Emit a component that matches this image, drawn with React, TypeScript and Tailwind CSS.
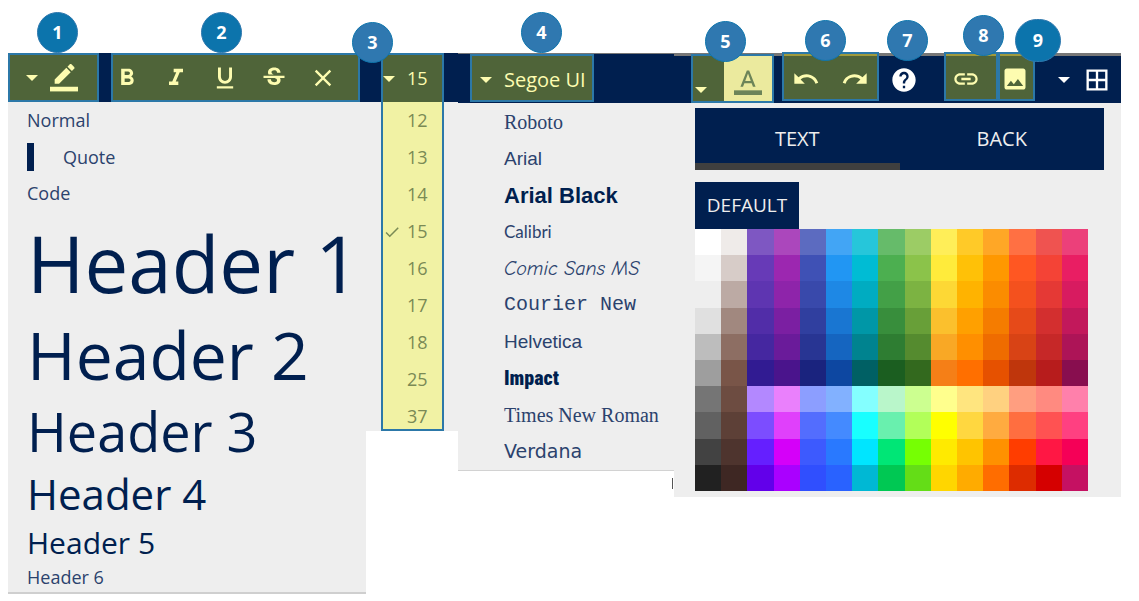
import type { ReactNode } from "react";
import {
  MdBorderAll,
  MdCheck,
  MdClose,
  MdFormatBold,
  MdFormatItalic,
  MdFormatUnderlined,
  MdHelp,
  MdImage,
  MdLink,
  MdRedo,
  MdStrikethroughS,
  MdUndo,
} from "react-icons/md";

const palette: string[][] = [
  ["#ffffff", "#f5f5f5", "#eeeeee", "#e0e0e0", "#bdbdbd", "#9e9e9e", "#757575", "#616161", "#424242", "#212121"],
  ["#efebe9", "#d7ccc8", "#bcaaa4", "#a1887f", "#8d6e63", "#795548", "#6d4c41", "#5d4037", "#4e342e", "#3e2723"],
  ["#7e57c2", "#673ab7", "#5e35b1", "#512da8", "#4527a0", "#311b92", "#b388ff", "#7c4dff", "#651fff", "#6200ea"],
  ["#ab47bc", "#9c27b0", "#8e24aa", "#7b1fa2", "#6a1b9a", "#4a148c", "#ea80fc", "#e040fb", "#d500f9", "#aa00ff"],
  ["#5c6bc0", "#3f51b5", "#3949ab", "#303f9f", "#283593", "#1a237e", "#8c9eff", "#536dfe", "#3d5afe", "#304ffe"],
  ["#42a5f5", "#2196f3", "#1e88e5", "#1976d2", "#1565c0", "#0d47a1", "#82b1ff", "#448aff", "#2979ff", "#2962ff"],
  ["#26c6da", "#00bcd4", "#00acc1", "#0097a7", "#00838f", "#006064", "#84ffff", "#18ffff", "#00e5ff", "#00b8d4"],
  ["#66bb6a", "#4caf50", "#43a047", "#388e3c", "#2e7d32", "#1b5e20", "#b9f6ca", "#69f0ae", "#00e676", "#00c853"],
  ["#9ccc65", "#8bc34a", "#7cb342", "#689f38", "#558b2f", "#33691e", "#ccff90", "#b2ff59", "#76ff03", "#64dd17"],
  ["#ffee58", "#ffeb3b", "#fdd835", "#fbc02d", "#f9a825", "#f57f17", "#ffff8d", "#ffff00", "#ffea00", "#ffd600"],
  ["#ffca28", "#ffc107", "#ffb300", "#ffa000", "#ff8f00", "#ff6f00", "#ffe57f", "#ffd740", "#ffc400", "#ffab00"],
  ["#ffa726", "#ff9800", "#fb8c00", "#f57c00", "#ef6c00", "#e65100", "#ffd180", "#ffab40", "#ff9100", "#ff6d00"],
  ["#ff7043", "#ff5722", "#f4511e", "#e64a19", "#d84315", "#bf360c", "#ff9e80", "#ff6e40", "#ff3d00", "#dd2c00"],
  ["#ef5350", "#f44336", "#e53935", "#d32f2f", "#c62828", "#b71c1c", "#ff8a80", "#ff5252", "#ff1744", "#d50000"],
  ["#ec407a", "#e91e63", "#d81b60", "#c2185b", "#ad1457", "#880e4f", "#ff80ab", "#ff4081", "#f50057", "#c51162"],
];

const sizes = [12, 13, 14, 15, 16, 17, 18, 25, 37];

const fonts: { name: string; className: string }[] = [
  { name: "Roboto", className: "font-['Liberation_Serif',serif] text-[20px]" },
  { name: "Arial", className: "font-['Liberation_Sans',sans-serif] text-[19px]" },
  { name: "Arial Black", className: "font-['Liberation_Sans',sans-serif] text-[22px] font-black text-[#001f4f]" },
  { name: "Calibri", className: "font-['Lato',sans-serif] text-[17px]" },
  { name: "Comic Sans MS", className: "font-['Comic_Sans_MS','Comic_Neue','Lato',cursive] text-[20px] italic" },
  { name: "Courier New", className: "font-['Liberation_Mono',monospace] text-[20px]" },
  { name: "Helvetica", className: "font-['Liberation_Sans',sans-serif] text-[19px]" },
  { name: "Impact", className: "font-['Impact','Roboto_Condensed','Open_Sans_Condensed','Inter',sans-serif] text-[20px] font-black text-[#001f4f]" },
  { name: "Times New Roman", className: "font-['Liberation_Serif',serif] text-[20px]" },
  { name: "Verdana", className: "font-['DejaVu_Sans',sans-serif] text-[19px]" },
];

function Caret() {
  return (
    <svg viewBox="0 0 12 6" className="h-1.5 w-3 shrink-0" fill="currentColor" aria-hidden="true">
      <path d="M0 0h12L6 6z" />
    </svg>
  );
}

function PencilIcon() {
  return (
    <svg viewBox="0 0 24 24" className="size-7" fill="currentColor" aria-hidden="true">
      <path d="M17.75 7L14 3.25l-10 10V17h3.75l10-10zm2.96-2.96c.39-.39.39-1.02 0-1.41L18.37.29c-.39-.39-1.02-.39-1.41 0L15 2.25 18.75 6l1.96-1.96z" />
      <path d="M0 19.5h24v4H0z" />
    </svg>
  );
}

function TextColorIcon() {
  return (
    <svg viewBox="0 0 24 24" className="size-7" fill="currentColor" aria-hidden="true">
      <path d="M0 20h24v4H0z" />
      <path d="M11 3L5.5 17h2.25l1.12-3h6.25l1.12 3h2.25L13 3h-2zm-1.38 9L12 5.67 14.38 12H9.62z" />
    </svg>
  );
}

function Badge({ n, place, wide = false }: { n: number; place: string; wide?: boolean }) {
  return (
    <span
      className={`absolute z-10 flex items-center justify-center rounded-full border text-[18px] font-bold text-white ${
        wide ? "h-[43px] w-[46px]" : "size-[41px]"
      } ${n < 3 || wide ? "border-[#2f78ae] bg-[#0c74ac]" : "border-[#0f76ad] bg-[#2f78b0]"} ${place}`}
    >
      {n}
    </span>
  );
}

function Tool({ label, children }: { label: string; children: ReactNode }) {
  return (
    <button type="button" aria-label={label} className="flex shrink-0 items-center justify-center">
      {children}
    </button>
  );
}

const group = "relative flex h-[49px] shrink-0 items-center border-2 border-[#2c78a8] bg-[#4f6439] text-[#fdfcb0]";
const rim = "-mt-1 bg-linear-to-b from-[#a09a3c] from-[2px] to-[#4f6439] to-[2px] pt-1";
const strip = "h-[3px] bg-[#777777]";

export default function App() {
  return (
    <main className="grid grid-cols-[358fr_92fr_216fr_447fr] items-start bg-white pt-[53px] pr-[18px] pb-2 pl-2 font-['Open_Sans','Noto_Sans',sans-serif] text-[18px] text-[#2b426d]">
      <section aria-label="Paragraph style">
        <div className="flex h-[49px] gap-3 bg-[#001f4f]">
          <div className={`${group} w-[91px] gap-3 pl-4`}>
            <Badge n={1} place="-top-[43px] left-[27px]" />
            <Tool label="Choose style">
              <Caret />
            </Tool>
            <Tool label="Style">
              <PencilIcon />
            </Tool>
          </div>
          <div className={`${group} w-[249px] gap-[21px]`}>
            <Badge n={2} place="-top-[43px] left-[88px]" />
            <Tool label="Bold">
              <MdFormatBold size={28} />
            </Tool>
            <Tool label="Italic">
              <MdFormatItalic size={28} />
            </Tool>
            <Tool label="Underline">
              <MdFormatUnderlined size={28} />
            </Tool>
            <Tool label="Strikethrough">
              <MdStrikethroughS size={28} />
            </Tool>
            <Tool label="Clear formatting">
              <MdClose size={28} />
            </Tool>
          </div>
        </div>
        <div className="border-b-2 border-[#cfcfcf] bg-[#eeeeee] pb-[3px] pl-[19px]">
          <p className="leading-[37px]">Normal</p>
          <blockquote className="flex h-9 items-center gap-[29px]">
            <span className="h-7 w-[7px] bg-[#001f4f]" />
            Quote
          </blockquote>
          <p className="leading-[37px]">Code</p>
          <div className="text-[#001f4f]">
            <h1 className="text-[78px] leading-[102px]">Header 1</h1>
            <h2 className="text-[66px] leading-[81px]">Header 2</h2>
            <h3 className="text-[54px] leading-[72px]">Header 3</h3>
            <h4 className="text-[42px] leading-[53px]">Header 4</h4>
            <h5 className="text-[30px] leading-[46px]">Header 5</h5>
            <h6 className="leading-[23px] text-[#2b426d]">Header 6</h6>
          </div>
        </div>
      </section>

      <section aria-label="Font size" className="bg-[#eeeeee]">
        <div className="bg-[#001f4f] pl-[15px]">
          <button
            type="button"
            className="relative flex h-[49px] w-[63px] items-center gap-3 border-2 border-b-0 border-[#2c78a8] bg-[#4f6439] text-[#fdfcb0]"
          >
            <Badge n={3} place="-top-[33px] -left-[31px]" />
            <Caret />
            15
          </button>
        </div>
        <ul className="ml-[15px] grid h-[329px] w-[63px] grid-rows-[repeat(9,37px)] border-2 border-t-0 border-[#2c78a8] bg-[#f1f2a4] text-[#7a8a55]">
          {sizes.map((s) => (
            <li key={s} className="flex items-center">
              <span className="w-6">{s === 15 && <MdCheck size={18} />}</span>
              {s}
            </li>
          ))}
        </ul>
      </section>

      <section aria-label="Font family">
        <div className={strip} />
        <div className="bg-[#001f4f] pb-[1px] pl-3">
          <button
            type="button"
            className="relative -mt-0.5 flex h-12 w-[124px] items-center gap-3 border-2 border-[#2c78a8] bg-[#4f6439] pt-1 pl-2 text-[20px] text-[#fdfcb0]"
          >
            <Badge n={4} place="-top-[44px] left-[49px]" />
            <Caret />
            <span className="whitespace-nowrap">Segoe UI</span>
          </button>
        </div>
        <ul className="grid h-[368px] auto-rows-fr border-b border-[#d2d2d2] bg-[#eeeeee] pt-px pl-[46px]">
          {fonts.map((f) => (
            <li key={f.name} className={`flex items-center whitespace-nowrap ${f.className}`}>
              {f.name}
            </li>
          ))}
        </ul>
      </section>

      <section aria-label="Colors and inserts">
        <div className={strip} />
        <div className="flex h-[47px] bg-[#001f4f] pl-[17px] text-white">
          <div className={`${group} -mt-0.5 w-[83px]`}>
            <Badge n={5} place="-top-[35px] left-[12px]" />
            <button type="button" aria-label="Choose color" className="flex h-full w-[31px] items-end pb-2 pl-0.5">
              <Caret />
            </button>
            <button
              type="button"
              aria-label="Text color"
              className="flex h-full flex-1 items-center justify-center bg-[#ebea9e] pt-1 text-[#6c8458]"
            >
              <TextColorIcon />
            </button>
          </div>
          <div className={`${group} ${rim} ml-2 w-[97px] justify-between px-2`}>
            <Badge n={6} place="-top-[34px] left-[21px]" />
            <Tool label="Undo">
              <MdUndo size={28} />
            </Tool>
            <Tool label="Redo">
              <MdRedo size={28} />
            </Tool>
          </div>
          <div className="relative ml-[11px] flex">
            <Badge n={7} place="-top-[36px] -left-[3px]" />
            <Tool label="Help">
              <MdHelp size={28} />
            </Tool>
          </div>
          <div className={`${group} ${rim} ml-[26px] w-[54px] justify-center pr-2.5`}>
            <Badge n={8} place="-top-[39px] left-[17px]" />
            <Tool label="Insert link">
              <MdLink size={28} />
            </Tool>
          </div>
          <div className={`${group} ${rim} w-[37px] justify-center pr-1`}>
            <Badge n={9} wide place="-top-[35px] left-[15px]" />
            <Tool label="Insert image">
              <MdImage size={28} />
            </Tool>
          </div>
          <div className="ml-[23px] flex gap-[13px]">
            <Tool label="Choose table">
              <Caret />
            </Tool>
            <Tool label="Insert table">
              <MdBorderAll size={28} />
            </Tool>
          </div>
        </div>
        <div className="relative bg-[#eeeeee] pt-[5px] pr-[17px] pb-1.5 pl-[21px]">
          <span className="absolute bottom-2 -left-0.5 h-[11px] w-px bg-[#555555]" />
          <div role="tablist" className="grid h-[62px] grid-cols-2 bg-[#001f4f] text-[20px] text-[#eeeeee]">
            <button type="button" role="tab" aria-selected="true" className="border-b-[7px] border-[#3f3f3f] pt-[7px]">
              TEXT
            </button>
            <button type="button" role="tab" aria-selected="false">
              BACK
            </button>
          </div>
          <button type="button" className="mt-3 flex h-[47px] w-[104px] items-center justify-center bg-[#001f4f] text-[19px] text-[#eeeeee]">
            DEFAULT
          </button>
          <div className="mr-4 grid aspect-[3/2] grid-flow-col grid-cols-15 grid-rows-10">
            {palette.flat().map((color, i) => (
              <button key={i} type="button" aria-label={color} style={{ backgroundColor: color }} />
            ))}
          </div>
        </div>
      </section>
    </main>
  );
}
